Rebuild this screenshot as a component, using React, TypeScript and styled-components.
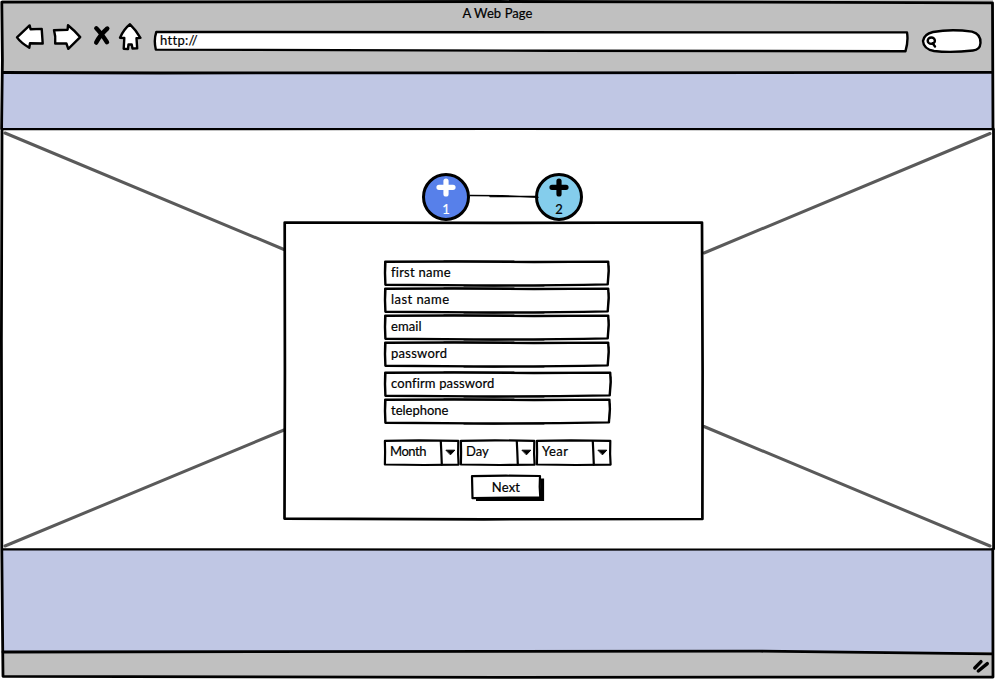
import React from "react";
import styled, { createGlobalStyle } from "styled-components";

const GlobalStyle = createGlobalStyle`
  * { box-sizing: border-box; }
  body { margin: 0; background: #fff; overflow: hidden; }
`;

const ink = "#000";

const Window = styled.div`
  width: 995px;
  height: 679px;
  display: flex;
  flex-direction: column;
  position: relative;
  font-family: Lato, "Open Sans", sans-serif;
  font-size: 13px;
  line-height: 16px;
  color: #000;
`;

/* Hand-drawn strokes laid over the box that owns them */
const Ink = styled.svg<{ $weight?: number }>`
  position: absolute;
  inset: 0;
  width: 100%;
  height: 100%;
  overflow: visible;
  pointer-events: none;
  fill: none;
  stroke: ${ink};
  stroke-width: ${(p) => p.$weight ?? 2.4};
  stroke-linecap: round;
  stroke-linejoin: round;
`;

const Label = styled.span<{ $track?: number }>`
  position: relative;
  white-space: nowrap;
  letter-spacing: ${(p) => p.$track ?? 0}px;
  -webkit-text-stroke: 0.2px currentColor;
`;

const Chrome = styled.header`
  height: 73px;
  margin: 0 2px;
  padding-top: 5px;
  background: #c0c0c0;
`;

const Title = styled.div`
  height: 18px;
  text-align: center;
`;

const Toolbar = styled.div`
  height: 30px;
  display: flex;
  align-items: center;
  padding: 0 10px 0 13px;
`;

const NavIcons = styled.svg`
  width: 128px;
  height: 30px;
  margin-right: 11px;
  fill: #fff;
  stroke: ${ink};
  stroke-width: 2.4;
  stroke-linejoin: round;
  stroke-linecap: round;
`;

const Address = styled.div`
  position: relative;
  width: 754px;
  height: 20px;
  margin-top: 6px;
  padding: 1px 6px;
`;

const Search = styled.div`
  position: relative;
  width: 60px;
  height: 24px;
  margin: 6px 0 0 13px;
`;

const Band = styled.div<{ $height: number }>`
  height: ${(p) => p.$height}px;
  margin: 0 2px;
  background: #c0c7e4;
`;

const Hero = styled.main`
  position: relative;
  height: 421px;
  padding: 44px 0 0 284px;
  background: #fff;
`;

const Steps = styled.div`
  position: relative;
  display: flex;
  justify-content: space-between;
  width: 161px;
  height: 48px;
  margin-left: 138px;
`;

const Step = styled.div<{ $fill: string; $color: string }>`
  width: 48px;
  height: 48px;
  border: 3px solid ${ink};
  border-radius: 50%;
  display: flex;
  flex-direction: column;
  align-items: center;
  background: ${(p) => p.$fill};
  color: ${(p) => p.$color};
`;

const Plus = styled.svg`
  width: 20px;
  height: 20px;
  margin-top: 2px;
  flex: none;
  fill: none;
  stroke: currentColor;
  stroke-width: 5.2;
  stroke-linecap: round;
`;

const StepNumber = styled.span`
  margin-top: 3px;
  line-height: 16px;
  -webkit-text-stroke: 0.2px currentColor;
`;

const Card = styled.form`
  position: relative;
  width: 420px;
  height: 299px;
  padding: 40px 0 0 100px;
`;

const Field = styled.div<{ $gap?: number }>`
  position: relative;
  width: 227px;
  height: 24px;
  margin-bottom: ${(p) => p.$gap ?? 3}px;
  padding: 3px 7px;
`;

const Dates = styled.div`
  display: flex;
  gap: 1px;
  margin-top: 17px;
`;

const Select = styled.div`
  position: relative;
  width: 75px;
  height: 26px;
  padding: 3px 6px;
`;

const Button = styled.div`
  position: relative;
  width: 73px;
  height: 26px;
  margin: 9px 0 0 87px;
  padding: 4px 3px 0 0;
  text-align: center;
`;

const StatusBar = styled.footer`
  height: 25px;
  margin: 0 2px;
  background: #c0c0c0;
`;

const fields = [
  { text: "first name", track: 0.25, right: 224.2, gap: 3 },
  { text: "last name", track: 0.45, right: 224.2, gap: 3 },
  { text: "email", track: 0.1, right: 224.2, gap: 3 },
  { text: "password", track: 0.25, right: 224.2, gap: 6 },
  { text: "confirm password", track: 0.14, right: 226.2, gap: 3 },
  { text: "telephone", track: 0, right: 225.4, gap: 0 },
];

function TextField({ text, track, right, gap }: (typeof fields)[number]) {
  return (
    <Field $gap={gap}>
      <Ink>
        <path d={`M1.2 .8L70 .5 150 1 ${right} .6L${right + 0.5} 10 ${right - 0.5} 23.4Q160 24.6 90 24.4L1.4 23.8 1 12Z`} fill="#fff" />
        <path d={`M60 .1L130 .3M80 24.8L160 24.8M${right + 0.6} 5L${right} 20M1.6 2L1.2 15`} strokeWidth="1.4" />
      </Ink>
      <Label $track={track}>{text}</Label>
    </Field>
  );
}

function DateSelect({ text, track }: { text: string; track: number }) {
  return (
    <Select>
      <Ink $weight={2.2}>
        <path d="M.9 .9L35 .3 74.3 .8 74.1 14 74.6 24.6 40 25 .9 24.5 1.1 12Z" fill="#fff" />
        <path d="M56.8 1.2L57.3 12 57.8 24.6" />
        <path d="M62.3 10.2L70.8 10.2 66.7 14.6Z" fill="#000" strokeWidth="1" />
      </Ink>
      <Label $track={track}>{text}</Label>
    </Select>
  );
}

export default function App() {
  return (
    <>
      <GlobalStyle />
      <Window>
        <Chrome>
          <Title><Label $track={0.08}>A Web Page</Label></Title>
          <Toolbar>
            <NavIcons viewBox="15 23 128 30">
              <path d="M17 37.4L29.6 25.4 30.6 29.3 41.7 28.9 42.7 43.5 30 43.2 29.3 47.7Q21 43 17 37.4Z" />
              <path d="M54 30.2L67.6 29.7 68 25.3Q75 31 80.2 37.1L68.3 48.8 66.4 43.5 55.2 43.5Q55.8 36 54 30.2Z" />
              <path d="M96.3 28.3Q101 33 107 42.2M107.3 28.5Q100 35 96.2 42.6" strokeWidth="4.4" style={undefined} />
              <path d="M130 24.3Q136 30 140.4 37.8L136.5 38.2 137.2 48.4 132.5 48.5 131.7 44.5 128.5 44.5 128 49 123.7 48.7 124.3 38 120 37.7Q124 29 130 24.3Z" />
            </NavIcons>
            <Address>
              <Ink>
                <path d="M2.3 .9L350 1.2 753 1.4Q754.5 10 751.5 20.2L400 19.8 1.8 18.6Q-.4 9 2.3 .9Z" fill="#fff" />
              </Ink>
              <Label $track={0.3}>http://</Label>
            </Address>
            <Search>
              <Ink>
                <path d="M12 3Q30-.3 51 2.6Q60 5 59.5 14Q59 21 52 21.5Q30 24 13 22Q2.5 20 2 12Q3 5 12 3Z" fill="#fff" />
                <ellipse cx="10.3" cy="11.7" rx="3.6" ry="3.2" />
                <path d="M11.6 14.3L14 17.5" />
              </Ink>
            </Search>
          </Toolbar>
        </Chrome>
        <Band $height={56} />
        <Hero>
          <Ink $weight={3}>
            <g stroke="#5a5a5a">
              <path d="M5 4L284 120.5M990 4.5L704 124M5 417L284 301M990 417L704 297.5" />
            </g>
          </Ink>
          <Steps>
            <Step $fill="#5780ea" $color="#fff">
              <Plus viewBox="0 0 20 20"><path d="M10 3V16M3 9.3H17" /></Plus>
              <StepNumber>1</StepNumber>
            </Step>
            <Step $fill="#84cdec" $color="#000">
              <Plus viewBox="0 0 20 20"><path d="M10 3V16M3 9.3H17" /></Plus>
              <StepNumber>2</StepNumber>
            </Step>
            <Ink>
              <path d="M48 22.4L80 22.7 116 24.2M68 23.5L115 23.4" strokeWidth="1.5" />
            </Ink>
          </Steps>
          <Card>
            <Ink>
              <path d="M.7 1.5L210 1.9 418 1.5 418.6 150 418.4 298 200 298.3 .5 297.6 .9 150Z" fill="#fff" strokeWidth="2.7" />
            </Ink>
            {fields.map((f) => <TextField key={f.text} {...f} />)}
            <Dates>
              <DateSelect text="Month" track={-0.45} />
              <DateSelect text="Day" track={0} />
              <DateSelect text="Year" track={0.4} />
            </Dates>
            <Button>
              <Ink>
                <path d="M5 24.2L71.2 24.2 71.2 3.5" strokeWidth="3.8" strokeLinecap="butt" strokeLinejoin="miter" />
                <path d="M1 1.2L35 .7 69 1 68.7 12 69.3 22.6 40 22.6 1.5 23.2Z" fill="#fff" strokeWidth="2.2" />
              </Ink>
              <Label $track={0.2}>Next</Label>
            </Button>
          </Card>
        </Hero>
        <Band $height={102} />
        <StatusBar />
        <Ink $weight={2.8}>
          <path d="M1.8 2.2L500 1.5 992.5 2.8 993 129M1.8 2.2L2.4 60 1.6 129M2 129L1.4 340 1.8 549M993.5 129L994 340 993.6 549M1.8 549L2.4 620 3 676.3 500 677.3 993 677 992.8 549" />
          <path d="M3 72.5L160 73 500 72.8 992 72.3M3 652L500 651.4 760 651.2 992 653.8" />
          <path d="M2 129.2L500 129 993 129.2M2 549.3L500 549.6 993 549.4" strokeWidth="2.2" />
          <path d="M974.8 668L981 661.6M978.3 671L987.3 663.6" strokeWidth="3.4" />
        </Ink>
      </Window>
    </>
  );
}
